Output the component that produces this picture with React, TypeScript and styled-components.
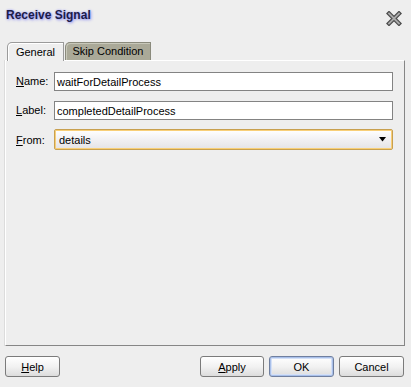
import React from "react";
import { createGlobalStyle, css, styled } from "styled-components";

const GlobalStyle = createGlobalStyle`
  html, body {
    margin: 0;
    padding: 0;
    background: #eeeeee;
  }
  body {
    font-family: "Liberation Sans", Arial, sans-serif;
    font-size: 11px;
    color: #000000;
  }
`;

const StyledDialog = styled.div`
  width: 411px;
  height: 387px;
  box-sizing: border-box;
  background: #eeeeee;
  display: flex;
  flex-direction: column;
  padding: 0 6px 0 5px;
`;

const StyledHeader = styled.div`
  height: 42px;
  display: flex;
  justify-content: space-between;
  align-items: flex-start;
  padding: 8px 3px 0 1px;
  box-sizing: border-box;
`;

const StyledTitle = styled.div`
  font-weight: bold;
  font-size: 12px;
  line-height: 14px;
  color: #1c1c48;
  text-shadow: 1px 1px 3px #8c8cf0, 0 0 2px #b0b0ff;
`;

const StyledClose = styled.svg`
  margin-top: 3px;
`;

const StyledTabStrip = styled.div`
  display: flex;
  gap: 1px;
  padding-left: 2px;
  height: 18px;
  position: relative;
  z-index: 1;
`;

const StyledTab = styled.div<{ active?: boolean }>`
  box-sizing: border-box;
  height: 19px;
  display: flex;
  align-items: center;
  justify-content: center;
  border: 1px solid #9a9a9a;
  border-bottom: none;
  border-top-left-radius: 5px;
  padding-bottom: 1px;
  ${({ active }) =>
    active
      ? css`
          width: 57px;
          background: #eeeeee;
          box-shadow: inset 1px 1px 0 #ffffff;
        `
      : css`
          width: 86px;
          height: 18px;
          background: #aaa998;
          border-color: #8a8a7c;
          box-shadow: inset 1px 1px 0 #c8c8ba;
        `}
`;

const StyledPanel = styled.div`
  height: 286px;
  box-sizing: border-box;
  border-top: 1px solid #ffffff;
  border-left: 1px solid #ffffff;
  border-right: 1px solid #868686;
  border-bottom: 1px solid #868686;
  box-shadow: -1px 0 0 #dcdcdc;
  padding: 11px 11px 0 10px;
  display: grid;
  grid-template-columns: 38px 1fr;
  grid-auto-rows: min-content;
  row-gap: 10px;
  align-items: center;
`;

const StyledLabel = styled.label`
  line-height: 13px;
`;

const StyledMnemonic = styled.span`
  text-decoration: underline;
`;

const StyledInput = styled.div`
  height: 19px;
  box-sizing: border-box;
  background: #ffffff;
  border: 1px solid #838383;
  padding: 0 2px;
  display: flex;
  align-items: center;
`;

const StyledCombo = styled.div`
  height: 21px;
  box-sizing: border-box;
  margin-top: -1px;
  border: 1px solid #c8a050;
  border-radius: 2px;
  box-shadow: inset 0 0 0 1px #f8cf78;
  background: linear-gradient(#ffffff, #f0eff2 55%, #e4e3e6);
  padding: 0 6px 0 4px;
  display: flex;
  align-items: center;
  justify-content: space-between;
`;

const StyledFooter = styled.div`
  margin-top: 10px;
  display: flex;
  justify-content: space-between;
  padding-right: 1px;
`;

const StyledButtonGroup = styled.div`
  display: flex;
  gap: 5px;
`;

const StyledButton = styled.div<{ width: number; focused?: boolean }>`
  width: ${({ width }) => width}px;
  height: 21px;
  box-sizing: border-box;
  border: 1px solid #7b7b7b;
  border-radius: 3px;
  background: linear-gradient(#ffffff, #f2f2f2 50%, #dcdcdc);
  display: flex;
  align-items: center;
  justify-content: center;
  font-size: 11px;
  ${({ focused }) =>
    focused &&
    css`
      border-color: #6f7f9f;
      box-shadow: inset 0 0 0 1px #a9c0ea, inset 0 0 0 2px #d4e0f6;
    `}
`;

const CloseIcon = () => (
  <StyledClose width="16" height="15" viewBox="0 0 16 15">
    <path d="M3 2.5 L13 12.5 M13 2.5 L3 12.5" stroke="#4a4a4a" strokeWidth="4.2" strokeLinecap="square" />
    <path d="M3 2.5 L13 12.5 M13 2.5 L3 12.5" stroke="#a9a9a9" strokeWidth="1.8" strokeLinecap="square" />
  </StyledClose>
);

const fields = [
  { key: "N", rest: "ame:", value: "waitForDetailProcess" },
  { key: "L", rest: "abel:", value: "completedDetailProcess" },
];

export default function App() {
  return (
    <>
      <GlobalStyle />
      <StyledDialog>
        <StyledHeader>
          <StyledTitle>Receive Signal</StyledTitle>
          <CloseIcon />
        </StyledHeader>
        <StyledTabStrip>
          <StyledTab active>General</StyledTab>
          <StyledTab>Skip Condition</StyledTab>
        </StyledTabStrip>
        <StyledPanel>
          {fields.map((f) => (
            <React.Fragment key={f.key}>
              <StyledLabel>
                <StyledMnemonic>{f.key}</StyledMnemonic>
                {f.rest}
              </StyledLabel>
              <StyledInput>{f.value}</StyledInput>
            </React.Fragment>
          ))}
          <StyledLabel>
            <StyledMnemonic>F</StyledMnemonic>rom:
          </StyledLabel>
          <StyledCombo>
            <span>details</span>
            <svg width="7" height="5" viewBox="0 0 7 5">
              <path d="M0 0 H7 L3.5 4.5 Z" fill="#000000" />
            </svg>
          </StyledCombo>
        </StyledPanel>
        <StyledFooter>
          <StyledButton width={55}>
            <span>
              <StyledMnemonic>H</StyledMnemonic>elp
            </span>
          </StyledButton>
          <StyledButtonGroup>
            <StyledButton width={64}>
              <span>
                <StyledMnemonic>A</StyledMnemonic>pply
              </span>
            </StyledButton>
            <StyledButton width={65} focused>
              OK
            </StyledButton>
            <StyledButton width={65}>Cancel</StyledButton>
          </StyledButtonGroup>
        </StyledFooter>
      </StyledDialog>
    </>
  );
}
